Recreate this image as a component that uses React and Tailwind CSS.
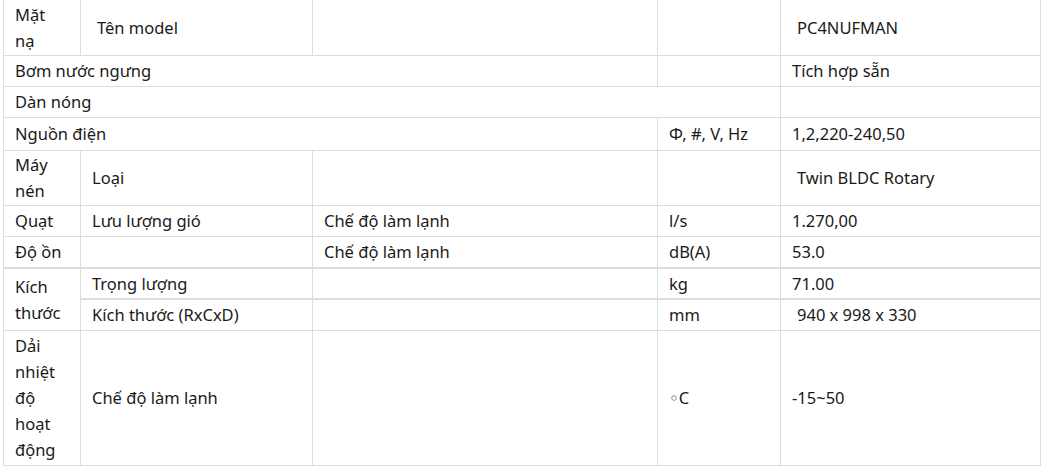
import React from 'react';

// spec table; padding classes are passed whole per cell so nothing conflicts
const Td = ({ className = '', children, ...rest }) => (
  <td className={`border border-[#dddddd] align-middle ${className}`} {...rest}>
    {children}
  </td>
);

const pad = 'pl-[11px] pr-[8px] py-[2px]';
const padTop = 'border-t-0 pl-[11px] pr-[8px] py-[2px]';

const SpecTable = () => {
  return (
    <table className="ml-[3px] w-[1037px] table-fixed border-collapse text-[16.5px] leading-[26px] text-[#1a1a1a]">
      <colgroup>
        <col className="w-[77px]" />
        <col className="w-[232px]" />
        <col className="w-[345px]" />
        <col className="w-[123px]" />
        <col className="w-[260px]" />
      </colgroup>
      <tbody>
        <tr>
          <Td className="border-t-0 pl-[11px] pr-[16px] py-[1.5px]">Mặt nạ</Td>
          <Td className="border-t-0 pl-[16px] pr-[8px] py-[2px]">Tên model</Td>
          <Td className={padTop}></Td>
          <Td className={padTop}></Td>
          <Td className="border-t-0 pl-[16px] pr-[8px] py-[2px]">PC4NUFMAN</Td>
        </tr>
        <tr>
          <Td className={pad} colSpan={3}>Bơm nước ngưng</Td>
          <Td className={pad}></Td>
          <Td className={pad}>Tích hợp sẵn</Td>
        </tr>
        <tr>
          <Td className={pad} colSpan={4}>Dàn nóng</Td>
          <Td className={pad}></Td>
        </tr>
        <tr>
          <Td className="pl-[11px] pr-[8px] py-[3px]" colSpan={3}>Nguồn điện</Td>
          <Td className="pl-[11px] pr-[8px] py-[3px]">Φ, #, V, Hz</Td>
          <Td className="pl-[11px] pr-[8px] py-[3px]">1,2,220-240,50</Td>
        </tr>
        <tr>
          <Td className="pl-[11px] pr-[16px] py-[1px]">Máy nén</Td>
          <Td className={pad}>Loại</Td>
          <Td className={pad}></Td>
          <Td className={pad}></Td>
          <Td className="pl-[16px] pr-[8px] py-[2px]">Twin BLDC Rotary</Td>
        </tr>
        <tr>
          <Td className={pad}>Quạt</Td>
          <Td className={pad}>Lưu lượng gió</Td>
          <Td className={pad}>Chế độ làm lạnh</Td>
          <Td className={pad}>l/s</Td>
          <Td className={pad}>1.270,00</Td>
        </tr>
        <tr>
          <Td className={pad}>Độ ồn</Td>
          <Td className={pad}></Td>
          <Td className={pad}>Chế độ làm lạnh</Td>
          <Td className={pad}>dB(A)</Td>
          <Td className={pad}>53.0</Td>
        </tr>
        <tr>
          <Td className="border-t-2 pl-[11px] pr-[16px] py-0" rowSpan={2}>Kích thước</Td>
          <Td className="border-t-2 pl-[11px] pr-[8px] py-[1.5px]">Trọng lượng</Td>
          <Td className="border-t-2 pl-[11px] pr-[8px] py-[1.5px]"></Td>
          <Td className="border-t-2 pl-[11px] pr-[8px] py-[1.5px]">kg</Td>
          <Td className="border-t-2 pl-[11px] pr-[8px] py-[1.5px]">71.00</Td>
        </tr>
        <tr>
          <Td className="border-t-2 pl-[11px] pr-[8px] py-[2px]">Kích thước (RxCxD)</Td>
          <Td className="border-t-2 pl-[11px] pr-[8px] py-[2px]"></Td>
          <Td className="border-t-2 pl-[11px] pr-[8px] py-[2px]">mm</Td>
          <Td className="border-t-2 pl-[16px] pr-[8px] py-[2px]">940 x 998 x 330</Td>
        </tr>
        <tr>
          <Td className="pl-[11px] pr-[16px] py-[2px]">Dải nhiệt độ hoạt động</Td>
          <Td className="pl-[11px] pr-[8px] py-[1px]">Chế độ làm lạnh</Td>
          <Td className="pl-[11px] pr-[8px] py-[1px]"></Td>
          <Td className="pl-[11px] pr-[8px] py-[1px]">◦C</Td>
          <Td className="pl-[11px] pr-[8px] py-[1px]">-15~50</Td>
        </tr>
      </tbody>
    </table>
  );
};

export default function App() {
  return (
    <div className="min-h-[469px] w-[1042px] bg-white font-['Noto_Sans','DejaVu_Sans',sans-serif]">
      <SpecTable />
    </div>
  );
}
